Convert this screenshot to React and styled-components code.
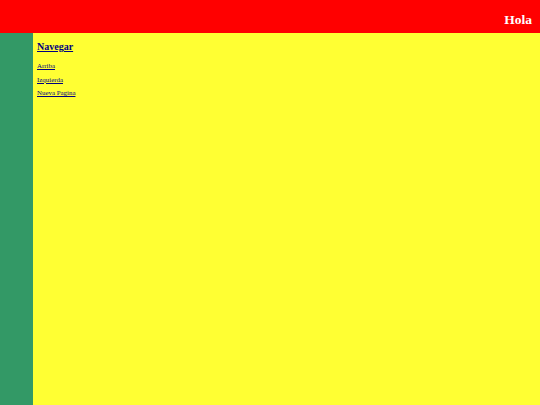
import React from "react";
import styled, { createGlobalStyle } from "styled-components";

const Global = createGlobalStyle`
  html, body { margin: 0; padding: 0; height: 100%; }
  body { font-family: "Liberation Serif", "Times New Roman", serif; background: #ffff33; }
  #root { height: 100%; }
`;

const Page = styled.div`
  display: flex;
  flex-direction: column;
  height: 405px;
`;

const Header = styled.header`
  height: 33px;
  background: #ff0000;
  display: flex;
  align-items: center;
  justify-content: flex-end;
  padding-right: 8px;
  box-sizing: border-box;
`;

const Title = styled.h1`
  margin: 6px 0 0;
  font-size: 13.5px;
  line-height: 15px;
  font-weight: bold;
  color: #ffffff;
`;

const Body = styled.div`
  flex: 1;
  display: flex;
`;

const Sidebar = styled.aside`
  width: 33px;
  background: #339966;
`;

const Main = styled.nav`
  flex: 1;
  background: #ffff33;
  padding: 7px 4px;
  display: flex;
  flex-direction: column;
  align-items: flex-start;
`;

const NavTitle = styled.a`
  font-size: 10px;
  line-height: 14px;
  font-weight: bold;
  color: #000080;
  text-decoration: underline;
  margin-bottom: 2.5px;
`;

const NavLink = styled.a`
  font-size: 6.9px;
  line-height: 9px;
  color: #000080;
  text-decoration: underline;
  margin-top: 4.5px;
`;

export default function App() {
  return (
    <>
      <Global />
      <Page>
        <Header>
          <Title>Hola</Title>
        </Header>
        <Body>
          <Sidebar />
          <Main>
            <NavTitle href="#">Navegar</NavTitle>
            <NavLink href="#">Arriba</NavLink>
            <NavLink href="#">Izquierda</NavLink>
            <NavLink href="#">Nueva Pagina</NavLink>
          </Main>
        </Body>
      </Page>
    </>
  );
}
